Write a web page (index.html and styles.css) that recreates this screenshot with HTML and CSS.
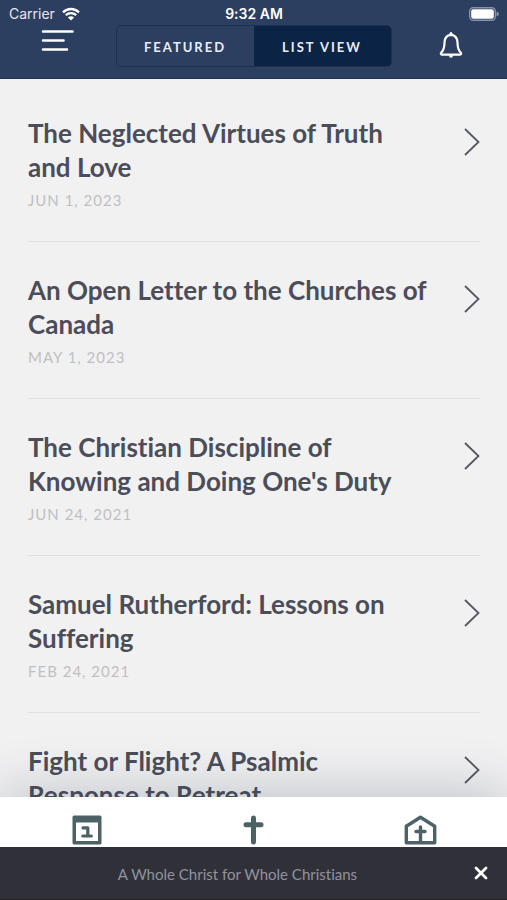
FILE: index.html
```html
<!DOCTYPE html>
<html lang="en">
<head>
<meta charset="utf-8">
<meta name="viewport" content="width=device-width, initial-scale=1">
<title>Articles</title>
<link rel="stylesheet" href="styles.css">
</head>
<body>
<div class="app">
  <header class="header">
    <div class="status">
      <div class="status-left">
        <span class="carrier">Carrier</span>
        <svg class="wifi" viewBox="0 0 18 14" aria-hidden="true">
          <path d="M1 5.3C5.6 .9 12.400 .9 17 5.300M3.800 8.200C6.800 5.400 11.200 5.400 14.200 8.200" fill="none" stroke="#fff" stroke-width="2.300"/>
          <path d="M9 13.500L5.900 10.400C7.700 8.900 10.300 8.900 12.100 10.400Z" fill="#fff"/>
        </svg>
      </div>
      <span class="clock">9:32 AM</span>
      <svg class="battery" viewBox="0 0 30 14" aria-hidden="true">
        <rect x=".7" y=".7" width="25.600" height="12.600" rx="3.500" fill="none" stroke="#8793a9" stroke-width="1.400"/>
        <rect x="2.200" y="2.200" width="22.600" height="9.600" rx="2" fill="#fff"/>
        <path d="M27.500 4.500Q30 5.200 30 7Q30 8.800 27.500 9.500Z" fill="#8793a9"/>
      </svg>
    </div>
    <div class="toolbar">
      <button class="icon-button menu" aria-label="Menu">
        <svg viewBox="0 0 34 24" width="34" height="24"><path d="M3 2.500H32.500M3 11.500H23.500M3 20.500H27" stroke="#fff" stroke-width="2.600" stroke-linecap="round"/></svg>
      </button>
      <div class="segments">
        <button class="segment">FEATURED</button>
        <button class="segment active">LIST VIEW</button>
      </div>
      <button class="icon-button bell" aria-label="Notifications">
        <svg viewBox="0 0 24 28" width="24" height="28" fill="none" stroke="#fff" stroke-width="2.200" stroke-linejoin="round" stroke-linecap="round">
          <path d="M12 2.800C7.500 3.200 5.600 6.600 5.500 10.500C5.400 16 4.700 18.500 2.300 20.500C1.400 21.500 1.800 22.700 3 22.700H21C22.200 22.700 22.600 21.500 21.700 20.500C19.300 18.500 18.600 16 18.500 10.500C18.400 6.600 16.500 3.200 12 2.800Z"/>
          <path d="M12 1.600V2.400" stroke-width="3"/>
          <path d="M9.800 23.200H14.200Q13.800 25.800 12 25.800Q10.200 25.800 9.800 23.200Z" fill="#fff" stroke="none"/>
        </svg>
      </button>
    </div>
  </header>

  <main class="list">
    <a class="row" href="#">
      <div class="text"><h2>The Neglected Virtues of Truth<br>and Love</h2><p class="date">JUN 1, 2023</p></div>
      <svg class="chevron" viewBox="0 0 16 28" aria-hidden="true"><path d="M1 1L14.500 14L1 27"/></svg>
    </a>
    <a class="row" href="#">
      <div class="text"><h2>An Open Letter to the Churches of<br>Canada</h2><p class="date">MAY 1, 2023</p></div>
      <svg class="chevron" viewBox="0 0 16 28" aria-hidden="true"><path d="M1 1L14.500 14L1 27"/></svg>
    </a>
    <a class="row" href="#">
      <div class="text"><h2>The Christian Discipline of<br>Knowing and Doing One's Duty</h2><p class="date">JUN 24, 2021</p></div>
      <svg class="chevron" viewBox="0 0 16 28" aria-hidden="true"><path d="M1 1L14.500 14L1 27"/></svg>
    </a>
    <a class="row" href="#">
      <div class="text"><h2>Samuel Rutherford: Lessons on<br>Suffering</h2><p class="date">FEB 24, 2021</p></div>
      <svg class="chevron" viewBox="0 0 16 28" aria-hidden="true"><path d="M1 1L14.500 14L1 27"/></svg>
    </a>
    <a class="row" href="#">
      <div class="text"><h2>Fight or Flight? A Psalmic<br>Response to Retreat</h2></div>
      <svg class="chevron" viewBox="0 0 16 28" aria-hidden="true"><path d="M1 1L14.500 14L1 27"/></svg>
    </a>
  </main>

  <nav class="tabs">
    <a class="tab" href="#" aria-label="Daily">
      <svg viewBox="0 0 34 30" width="34" height="30">
        <path fill-rule="evenodd" d="M4 .5H30Q31.500 .5 31.500 2V28Q31.500 29.500 30 29.500H4Q2.500 29.500 2.500 28V2Q2.500 .5 4 .5ZM6 7.500V26H28V7.500Z" fill="#4c6267"/>
        <path d="M13 12.800H17.800V21M12.800 21H21.300" fill="none" stroke="#4c6267" stroke-width="3.200" stroke-linecap="round" stroke-linejoin="round"/>
      </svg>
    </a>
    <a class="tab" href="#" aria-label="Christ">
      <svg viewBox="0 0 34 30" width="34" height="30"><path d="M16.500 3V27M9 9.800H24" fill="none" stroke="#4c6267" stroke-width="5" stroke-linecap="round"/></svg>
    </a>
    <a class="tab" href="#" aria-label="Church">
      <svg viewBox="0 0 34 30" width="34" height="30" fill="none" stroke="#4c6267" stroke-linecap="round" stroke-linejoin="round">
        <path d="M2.300 11.200L16.500 2.200L30.700 11.200V27.800H2.300Z" stroke-width="3.400"/>
        <path d="M16.500 12V27M12 16.500H21" stroke-width="3.400"/>
      </svg>
    </a>
  </nav>

  <footer class="player">
    <span class="player-title">A Whole Christ for Whole Christians</span>
    <button class="icon-button close" aria-label="Close">
      <svg viewBox="0 0 14 14" width="14" height="14"><path d="M2 2L12 12M12 2L2 12" stroke="#fff" stroke-width="2.800" stroke-linecap="round"/></svg>
    </button>
  </footer>
</div>
</body>
</html>
```
FILE: styles.css
```css
* { box-sizing: border-box; }

body {
  margin: 0;
  font-family: Lato, "Liberation Sans", sans-serif;
  font-variant-ligatures: none;
  background: #f1f1f2;
}

.app {
  height: 100vh;
  display: flex;
  flex-direction: column;
  overflow: hidden;
}

.header {
  flex: none;
  background: #2c3f60;
  border-bottom: 1px solid #1d3354;
  color: #fff;
}

.status {
  display: grid;
  grid-template-columns: 1fr auto 1fr;
  align-items: center;
  height: 25px;
  padding: 2px 8px 0 9px;
  font-family: Inter, sans-serif;
  font-size: 14px;
}

.status-left { display: flex; align-items: center; gap: 7px; color: #e4e8ee; }
.wifi { width: 18px; height: 14px; }
.clock { font-weight: 600; }
.battery { width: 30px; height: 14px; justify-self: end; }

.toolbar {
  display: grid;
  grid-template-columns: 1fr 276px 1fr;
  align-items: start;
  padding: 0 28px 11px;
}

.icon-button {
  display: flex;
  padding: 0;
  border: 0;
  background: none;
  cursor: pointer;
}

.menu { margin: 4px 0 0 12px; }
.bell { margin: 7px 16px 0 0; justify-self: end; }

.segments {
  display: flex;
  height: 42px;
  border: 1px solid #1c3153;
  border-radius: 5px;
  overflow: hidden;
}

.segment {
  flex: 1;
  padding: 2px 0 0;
  border: 0;
  background: none;
  color: #e9edf3;
  font-family: inherit;
  font-size: 13px;
  font-weight: 700;
  letter-spacing: 2px;
}

.active { background: #0b2445; }

.list {
  flex: 1;
  min-height: 0;
  overflow: hidden;
  padding: 6px 27px 0 28px;
}

.row {
  display: flex;
  justify-content: space-between;
  align-items: flex-start;
  gap: 24px;
  padding: 31px 0;
  border-bottom: 1px solid #e0e1e3;
  color: #4b4d59;
  text-decoration: none;
}

.row h2 {
  margin: 0;
  font-size: 26px;
  font-weight: 700;
  line-height: 34px;
}

.date {
  margin: 6px 0 0;
  color: #bfc0c2;
  font-size: 15px;
  line-height: 20px;
  letter-spacing: 1px;
}

.chevron {
  flex: none;
  width: 16px;
  height: 28px;
  margin-top: 12px;
  fill: none;
  stroke: #555761;
  stroke-width: 1.8;
}

.tabs {
  position: relative;
  flex: none;
  display: flex;
  justify-content: space-around;
  height: 50px;
  padding: 18px 3px 0;
  background: #fff;
  box-shadow: 0 0 56px rgba(44, 52, 72, 0.3);
}

.tab { display: flex; }

.player {
  position: relative;
  flex: none;
  display: grid;
  grid-template-columns: 60px 1fr 60px;
  align-items: center;
  height: 53px;
  background: #303138;
  border-bottom: 1px solid #241f27;
}

.player-title {
  grid-column: 2;
  padding: 2px 32px 0 0;
  text-align: center;
  color: #9092a0;
  font-size: 15px;
  line-height: 20px;
}

.close { justify-self: center; margin-left: 8px; }
```
